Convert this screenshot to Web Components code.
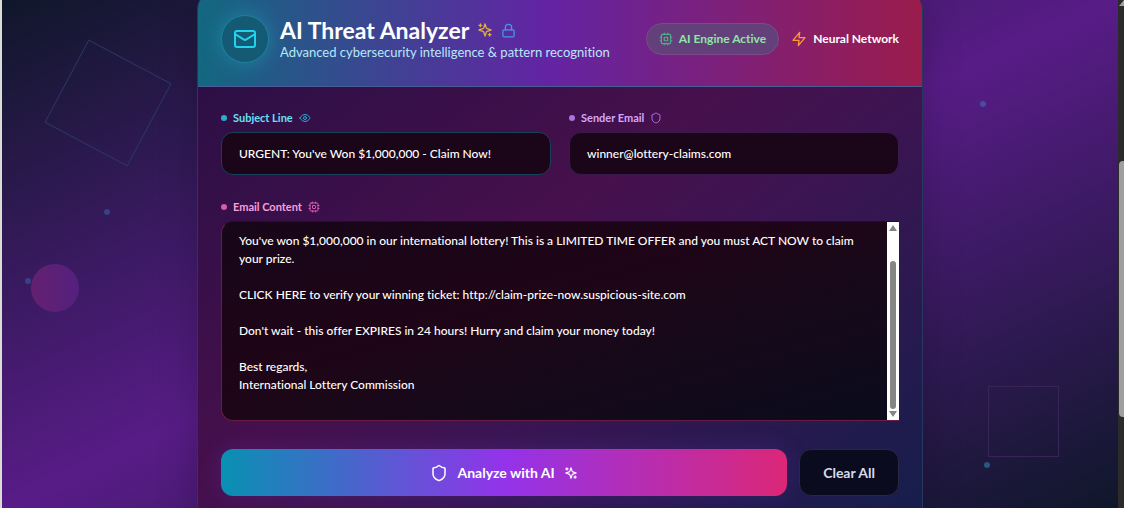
<!DOCTYPE html>
<html lang="en">
<head>
<meta charset="utf-8">
<title>AI Threat Analyzer</title>
<style>
  html, body { height: 100%; }
  body {
    margin: 0;
    overflow: hidden;
    background: #d9ddd6;
    color: #fff;
    font-family: Lato, "Open Sans", sans-serif;
    font-size: 12px;
    font-variant-ligatures: none;
  }
</style>
</head>
<body>
<app-shell>
  <page-backdrop slot="backdrop"></page-backdrop>
  <analyzer-card>
    <card-header slot="header">
      <status-pill slot="status"></status-pill>
    </card-header>
    <text-field tone="cyan" icon="eye" label="Subject Line" value="URGENT: You've Won $1,000,000 - Claim Now!"></text-field>
    <text-field tone="violet" icon="shield" type="email" label="Sender Email" value="winner@lottery-claims.com"></text-field>
    <message-field slot="message" label="Email Content">You've won $1,000,000 in our international lottery! This is a LIMITED TIME OFFER and you must ACT NOW to claim your prize.

CLICK HERE to verify your winning ticket: http://claim-prize-now.suspicious-site.com

Don't wait - this offer EXPIRES in 24 hours! Hurry and claim your money today!

Best regards,
International Lottery Commission</message-field>
    <action-bar slot="actions"></action-bar>
  </analyzer-card>
</app-shell>

<script>
const ICONS = {
  mail: '<rect x="2" y="4" width="20" height="16" rx="2"/><path d="m22 7-8.97 5.7a1.94 1.94 0 0 1-2.06 0L2 7"/>',
  sparkles: '<path d="m12 3-1.912 5.813a2 2 0 0 1-1.275 1.275L3 12l5.813 1.912a2 2 0 0 1 1.275 1.275L12 21l1.912-5.813a2 2 0 0 1 1.275-1.275L21 12l-5.813-1.912a2 2 0 0 1-1.275-1.275L12 3Z"/><path d="M5 3v4M19 17v4M3 5h4M17 19h4"/>',
  lock: '<rect x="3" y="11" width="18" height="11" rx="2"/><path d="M7 11V7a5 5 0 0 1 10 0v4"/>',
  cpu: '<rect x="4" y="4" width="16" height="16" rx="2"/><rect x="9" y="9" width="6" height="6" rx="1"/><path d="M15 2v2M15 20v2M2 15h2M2 9h2M20 15h2M20 9h2M9 2v2M9 20v2"/>',
  zap: '<path d="M13 2 3 14h9l-1 8 10-12h-9l1-8z"/>',
  eye: '<path d="M2 12s3-7 10-7 10 7 10 7-3 7-10 7-10-7-10-7Z"/><circle cx="12" cy="12" r="3"/>',
  shield: '<path d="M20 13c0 5-3.5 7.5-7.66 8.95a1 1 0 0 1-.67-.01C7.5 20.5 4 18 4 13V6a1 1 0 0 1 1-1c2 0 4.5-1.2 6.24-2.72a1.17 1.17 0 0 1 1.52 0C14.51 3.81 17 5 19 5a1 1 0 0 1 1 1z"/>'
};

const TONES = {
  cyan:   { text: '#67e0f5', accent: '#2aaccc', border: '#164259' },
  violet: { text: '#d3a8fb', accent: '#a973e2', border: '#3a1a4c' },
  pink:   { text: '#f59fdc', accent: '#d75bae', border: '#6b1c45' }
};

class Base extends HTMLElement {
  connectedCallback() {
    if (this.shadowRoot) return;
    this.attachShadow({ mode: 'open' }).innerHTML = `<style>*{box-sizing:border-box}${this.css()}</style>${this.html()}`;
    this.ready?.();
  }
}

customElements.define('ui-icon', class extends Base {
  css() { return `:host{display:block;flex:none;width:var(--size,12px);height:var(--size,12px)} svg{display:block;width:100%;height:100%}`; }
  html() { return `<svg viewBox="0 0 24 24" fill="none" stroke="currentColor" stroke-width="2" stroke-linecap="round" stroke-linejoin="round" aria-hidden="true">${ICONS[this.getAttribute('name')]}</svg>`; }
});

customElements.define('app-shell', class extends Base {
  css() { return `
    :host{display:grid;grid-template-columns:minmax(0,1fr) 6px;height:100vh;padding-left:2px;box-sizing:border-box;overflow:hidden}
    main{position:relative;overflow:hidden;padding:0 24px;background:linear-gradient(to bottom right,#0f172a,#581c87,#0f172a)}
    .track{display:grid;grid-template-rows:161fr 256fr 91fr;background:#2b2b2b;padding-left:1px}
    .thumb{grid-row:2;background:#9f9f9f;border-radius:4px 0 0 4px}
    .up{width:0;height:0;border:solid transparent;border-width:0 0 6px 5px;border-bottom-color:#9f9f9f}`; }
  html() { return `<main><slot name="backdrop"></slot><slot></slot></main><div class="track"><div class="up"></div><div class="thumb"></div></div>`; }
});

customElements.define('page-backdrop', class extends Base {
  css() { return `
    :host{position:absolute;inset:0;display:block;overflow:hidden}
    i{position:absolute;display:block}
    .tilt{left:59px;top:56px;width:94px;height:94px;border:1px solid #2b3768;transform:rotate(28deg)}
    .square{right:59px;top:386px;width:71px;height:71px;border:1px solid #382558}
    .orb{left:29px;top:264px;width:48px;height:48px;border-radius:50%;background:linear-gradient(to right,#642070,#54207f)}
    .dot{width:6px;height:6px;border-radius:50%;background:#374286}
    .d1{left:102px;top:209px}.d2{left:23px;top:278px}
    .d3{right:132px;top:101px;background:#484da4}.d4{right:128px;top:462px;background:#2a5580}`; }
  html() { return `<i class="tilt"></i><i class="square"></i><i class="orb"></i><i class="dot d1"></i><i class="dot d2"></i><i class="dot d3"></i><i class="dot d4"></i>`; }
});

customElements.define('analyzer-card', class extends Base {
  css() { return `
    :host{display:block;position:relative;box-sizing:border-box;max-width:726px;margin:-9px auto 0;border:1px solid #27375f;border-radius:18px;overflow:hidden;
      background:linear-gradient(to bottom right,#260f44,#46104c 45%,#3a1552 62%,#131f4b);box-shadow:0 12px 40px #0003}
    .body{padding:23px 23px 40px}
    .row{display:grid;grid-template-columns:1fr 1fr;gap:18px;margin-bottom:24px}`; }
  html() { return `<slot name="header"></slot><div class="body"><div class="row"><slot></slot></div><slot name="message"></slot><slot name="actions"></slot></div>`; }
});

customElements.define('card-header', class extends Base {
  css() { return `
    :host{display:flex;align-items:center;justify-content:space-between;gap:24px;padding:23px;border-bottom:1px solid #4a5c96;
      background:linear-gradient(to right,#136880,#6324a3 48%,#9a1c4c)}
    .brand{display:flex;align-items:center;gap:11px;white-space:nowrap}
    .badge{display:grid;flex:none;place-items:center;width:48px;height:48px;border-radius:50%;background:#155a75;border:1px solid #1b8298;color:#22d3ee;--size:24px;box-shadow:0 0 20px #22b8d466}
    h1{display:flex;align-items:center;gap:8px;margin:0;font-size:23px;line-height:26px;font-weight:700}
    h1 ui-icon{--size:16px;color:#e2ad3c}
    h1 .lock{color:#3f9bea;--size:15px}
    p{margin:0;font-size:13px;line-height:18px;color:#b5e9fa}`; }
  html() { return `<div class="brand"><div class="badge"><ui-icon name="mail"></ui-icon></div><div><h1>AI Threat Analyzer <ui-icon name="sparkles"></ui-icon><ui-icon class="lock" name="lock"></ui-icon></h1><p>Advanced cybersecurity intelligence &amp; pattern recognition</p></div></div><slot name="status"></slot>`; }
});

customElements.define('status-pill', class extends Base {
  css() { return `
    :host{display:flex;align-items:center;gap:12px;font-size:12px;line-height:18px;font-weight:700;white-space:nowrap}
    span{display:flex;align-items:center;gap:6px}
    .pill{padding:6px 12px;border:1px solid #7a4a8c;border-radius:16px;background:#63407a;color:#8ee6a6}
    .pill ui-icon{--size:14px;color:#4fae8c}
    .net ui-icon{--size:16px;color:#f79a35}`; }
  html() { return `<span class="pill"><ui-icon name="cpu"></ui-icon>AI Engine Active</span><span class="net"><ui-icon name="zap"></ui-icon>Neural Network</span>`; }
});

const labelCss = t => `
  :host{display:block;min-width:0}
  label{display:flex;align-items:center;gap:6px;height:16px;margin-bottom:6px;font-size:11px;line-height:16px;font-weight:700;color:${t.text}}
  label::before{content:"";width:6px;height:6px;border-radius:50%;background:${t.accent}}
  label ui-icon{color:${t.accent};--size:12px}`;

customElements.define('text-field', class extends Base {
  css() { const t = TONES[this.getAttribute('tone')]; return labelCss(t) + `
    input{display:block;width:100%;height:43px;margin:0;padding:0 17px;border:1px solid ${t.border};border-radius:12px;background:#1a0618;color:#fff;font:inherit;font-weight:500;font-variant-ligatures:none;outline:0}`; }
  html() { return `<label for="field">${this.getAttribute('label')}<ui-icon name="${this.getAttribute('icon')}"></ui-icon></label><input id="field" type="${this.getAttribute('type') || 'text'}">`; }
  ready() { this.shadowRoot.querySelector('input').value = this.getAttribute('value'); }
});

customElements.define('message-field', class extends Base {
  css() { return labelCss(TONES.pink) + `
    .box{display:flex;height:200px;border:1px solid #6b1c45;border-top-color:#2a0c26;border-radius:12px 0 0 12px;border-right-width:0;background:linear-gradient(to bottom right,#170719,#1e0517 40%,#1a0819 55%,#0a0c1c);overflow:hidden}
    textarea{flex:1;min-width:0;margin:0;padding:10px 17px;border:0;background:none;color:#fff;font:inherit;font-weight:500;font-variant-ligatures:none;line-height:18px;resize:none;overflow:hidden;outline:0}
    .bar{display:flex;flex-direction:column;align-items:center;gap:2px;width:12px;padding:3px 0;background:#fff}
    .thumb{flex:1;width:6px;margin-top:28px;border-radius:3px;background:#858585}
    .up,.down{width:0;height:0;border:4px solid transparent}
    .up{border-top:0;border-bottom:6px solid #858585}
    .down{border-bottom:0;border-top:6px solid #858585}`; }
  html() { return `<label for="field">${this.getAttribute('label')}<ui-icon name="cpu"></ui-icon></label><div class="box"><textarea id="field" spellcheck="false"></textarea><div class="bar"><div class="up"></div><div class="thumb"></div><div class="down"></div></div></div>`; }
  ready() { this.shadowRoot.querySelector('textarea').value = this.textContent; }
});

customElements.define('action-bar', class extends Base {
  css() { return `
    :host{display:flex;gap:12px;margin-top:28px}
    button{display:flex;align-items:center;justify-content:center;height:47px;margin:0;padding:0 23px;border-radius:12px;font:inherit;font-size:14px;font-weight:700;white-space:nowrap}
    .go{flex:1;gap:9px;border:0;color:#fff;background:linear-gradient(to right,#0891b2,#9333ea,#db2777);box-shadow:0 0 24px #7c3aed33}
    .go .shield{--size:18px}
    .go .spark{--size:14px}
    .clear{border:1px solid #2a2740;background:#0b0b20;color:#d6dbe8}`; }
  html() { return `<button class="go" type="button"><ui-icon class="shield" name="shield"></ui-icon>Analyze with AI<ui-icon class="spark" name="sparkles"></ui-icon></button><button class="clear" type="button">Clear All</button>`; }
});
</script>
</body>
</html>
